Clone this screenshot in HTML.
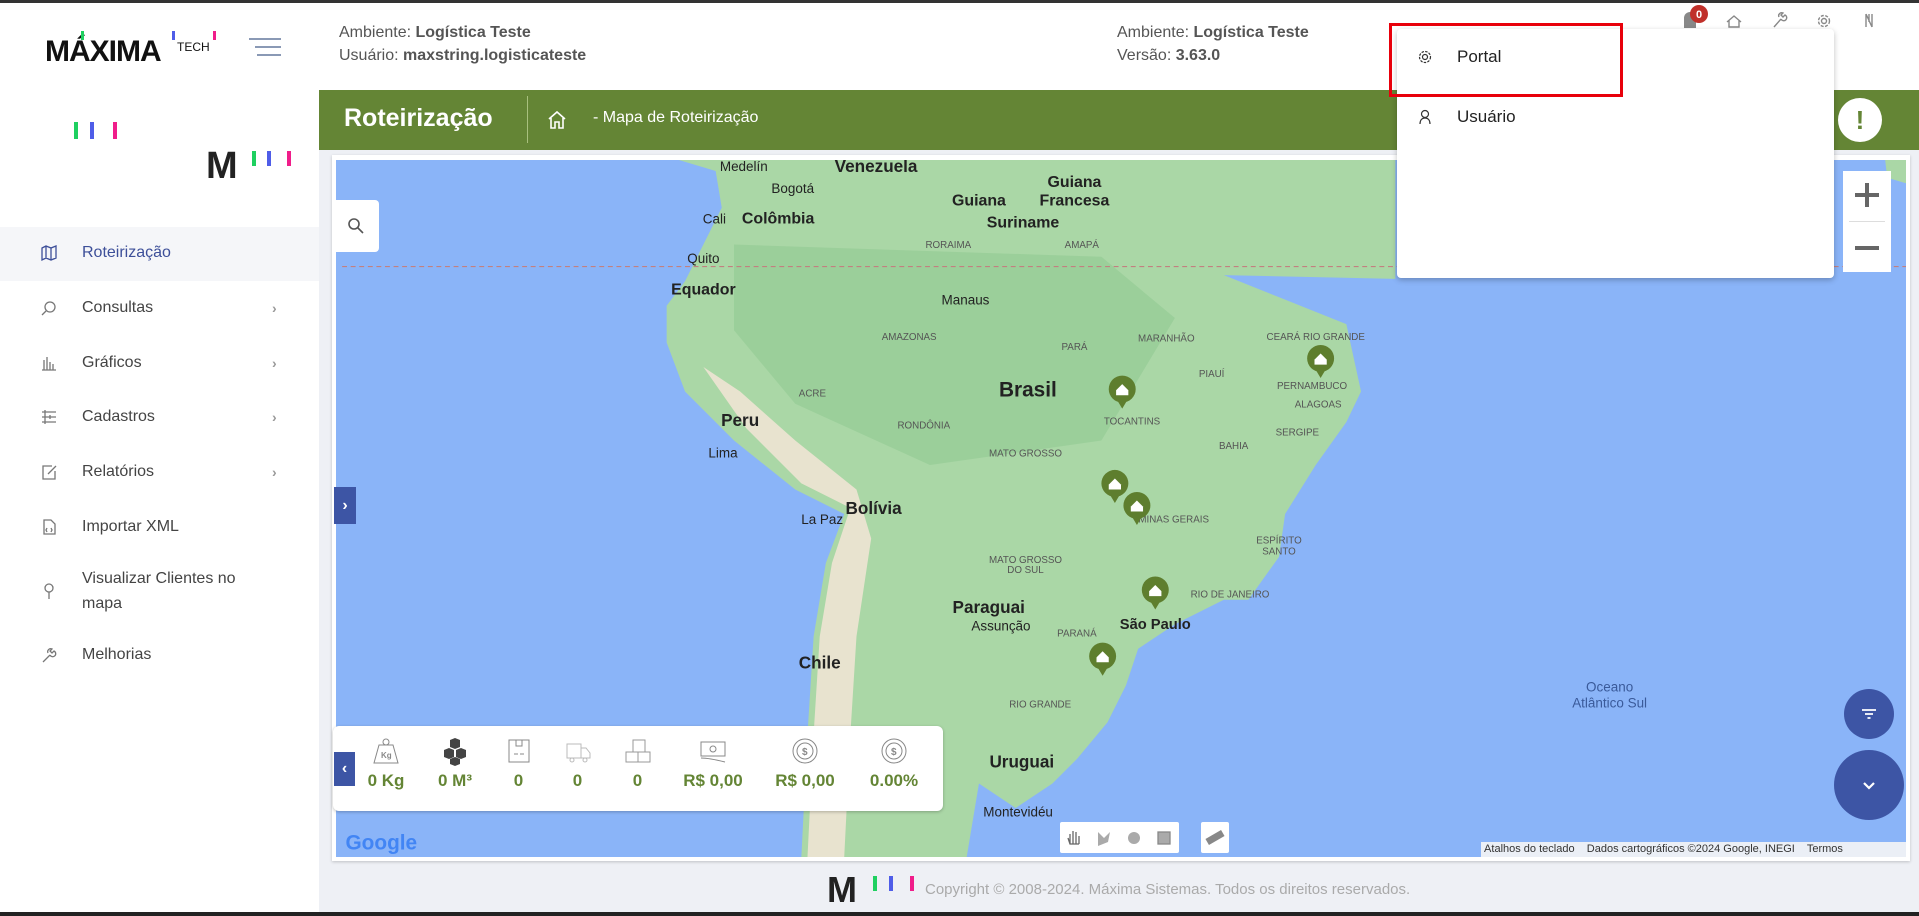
<!DOCTYPE html>
<html><head><meta charset="utf-8">
<style>
*{box-sizing:border-box;margin:0;padding:0}
body{width:1919px;height:916px;overflow:hidden;background:#eef0f5;font-family:"Liberation Sans",sans-serif;position:relative;color:#333}
.a{position:absolute}
.hdr{left:0;top:0;width:1919px;height:90px;background:#fff;border-top:3px solid #333}
.htxt{font-size:16px;color:#555;line-height:23px}
.htxt b{color:#555}
.side{left:0;top:90px;width:319px;height:826px;background:#fff}
.mi{position:absolute;left:0;width:319px;height:40px;font-size:16px;color:#444;display:flex;align-items:center}
.mi .ic{position:absolute;left:40px;width:18px;height:18px}
.mi span{position:absolute;left:82px}
.mi .ch{position:absolute;left:272px;color:#999;font-size:14px}
.green{left:319px;top:90px;width:1600px;height:60px;background:#648535}
.stat{position:absolute;top:0;text-align:center;color:#648535;font-weight:bold;font-size:17px}
</style></head><body>
<div class="a hdr"></div>
<div class="a" style="left:45px;top:35px;font-size:30px;font-weight:bold;color:#111;letter-spacing:-1px">MÁXIMA</div>
<div class="a" style="left:177px;top:40px;font-size:12px;color:#111">TECH</div>
<div class="a" style="left:81px;top:31px;width:3px;height:9px;background:#1fd060"></div>
<div class="a" style="left:172px;top:31px;width:3px;height:9px;background:#4f5de8"></div>
<div class="a" style="left:213px;top:31px;width:3px;height:9px;background:#f01d8a"></div>
<div class="a" style="left:249px;top:38px;width:32px;height:2px;background:#8a99b5"></div>
<div class="a" style="left:255px;top:46px;width:26px;height:2px;background:#8a99b5"></div>
<div class="a" style="left:257px;top:54px;width:24px;height:2px;background:#8a99b5"></div>
<div class="a htxt" style="left:339px;top:21px">Ambiente: <b>Logística Teste</b><br>Usuário: <b>maxstring.logisticateste</b></div>
<div class="a htxt" style="left:1117px;top:21px">Ambiente: <b>Logística Teste</b><br>Versão: <b>3.63.0</b></div>
<svg class="a" style="left:1672px;top:0" width="240" height="36" viewBox="0 0 240 36" fill="none" stroke="#888" stroke-width="1.4">
<path d="M12 28v-10a6 6 0 0 1 12 0v10z" fill="#888" stroke="none"/>
<circle cx="27" cy="14" r="9" fill="#c0302a" stroke="none"/>
<text x="27" y="18" font-size="11" fill="#fff" stroke="none" text-anchor="middle" font-weight="bold" font-family="Liberation Sans">0</text>
<path d="M55 22l7-6 7 6M57 20v7h10v-7"/>
<path d="M102 27l7-8m0 0a3 3 0 1 0 4-4l-2 2-2-2 2-2a3 3 0 0 0-4 4"/>
<circle cx="152" cy="21" r="2.5"/><circle cx="152" cy="21" r="5.5" stroke-dasharray="3 1.5"/>
<path d="M194 14v13M194 14l6 13M200 14v13M197 14v8"/>
</svg>
<div class="a side"></div>
<div class="a" style="left:74px;top:122px;width:4px;height:17px;background:#1fd060"></div>
<div class="a" style="left:90px;top:122px;width:4px;height:17px;background:#4f5de8"></div>
<div class="a" style="left:113px;top:122px;width:4px;height:17px;background:#f01d8a"></div>
<div class="a" style="left:206px;top:145px;font-size:38px;font-weight:bold;color:#222">M</div>
<div class="a" style="left:252px;top:151px;width:4px;height:15px;background:#1fd060"></div>
<div class="a" style="left:267px;top:151px;width:4px;height:15px;background:#4f5de8"></div>
<div class="a" style="left:287px;top:151px;width:4px;height:15px;background:#f01d8a"></div>
<div class="a" style="left:0;top:227px;width:319px;height:54px;background:#f5f6f9"></div>
<div class="mi" style="top:233px;color:#3d4f99"><svg class="ic" style="top:11px" viewBox="0 0 18 18" fill="none" stroke="#3d4f99" stroke-width="1.3"><path d="M2 4l4-2 5 2 5-2v12l-5 2-5-2-4 2zM6 2v12M11 4v12"/></svg><span>Roteirização</span></div>
<div class="mi" style="top:288px"><svg class="ic" style="top:11px" viewBox="0 0 18 18" fill="none" stroke="#777" stroke-width="1.3"><circle cx="10" cy="8" r="5"/><path d="M6 12l-4 4"/></svg><span>Consultas</span><b class="ch">›</b></div>
<div class="mi" style="top:343px"><svg class="ic" style="top:11px" viewBox="0 0 18 18" fill="none" stroke="#777" stroke-width="1.3"><path d="M2 16h14M4 16V6M7 16V3M10 16V8M13 16V10"/></svg><span>Gráficos</span><b class="ch">›</b></div>
<div class="mi" style="top:397px"><svg class="ic" style="top:11px" viewBox="0 0 18 18" fill="none" stroke="#777" stroke-width="1.3"><path d="M2 4h14M2 9h14M2 14h14M5 2v14M10 7v4"/></svg><span>Cadastros</span><b class="ch">›</b></div>
<div class="mi" style="top:452px"><svg class="ic" style="top:11px" viewBox="0 0 18 18" fill="none" stroke="#777" stroke-width="1.3"><path d="M12 3H3v13h12V8M8 11l8-8"/></svg><span>Relatórios</span><b class="ch">›</b></div>
<div class="mi" style="top:507px"><svg class="ic" style="top:11px" viewBox="0 0 18 18" fill="none" stroke="#777" stroke-width="1.3"><path d="M4 2h7l4 4v10H4zM7 10l-1 2 1 2M11 10l1 2-1 2"/></svg><span>Importar XML</span></div>
<div class="mi" style="top:566px;height:50px"><svg class="ic" style="top:16px" viewBox="0 0 18 18" fill="none" stroke="#777" stroke-width="1.3"><circle cx="9" cy="6" r="4"/><path d="M9 10v7"/></svg><span style="line-height:25px">Visualizar Clientes no<br>mapa</span></div>
<div class="mi" style="top:635px"><svg class="ic" style="top:11px" viewBox="0 0 18 18" fill="none" stroke="#777" stroke-width="1.3"><path d="M3 16l7-7m0 0a3 3 0 1 0 4-4l-2 2-2-2 2-2a3 3 0 0 0-4 4"/></svg><span>Melhorias</span></div>
<div class="a green"></div>
<div class="a" style="left:344px;top:104px;font-size:25px;font-weight:bold;color:#fff">Roteirização</div>
<div class="a" style="left:527px;top:96px;width:1px;height:47px;background:#a8c07e"></div>
<svg class="a" style="left:548px;top:110px" width="18" height="20" viewBox="0 0 18 20" fill="none" stroke="#fff" stroke-width="1.6"><path d="M1 9l8-7 8 7M3 8v10h4v-6h4v6h4V8"/></svg>
<div class="a" style="left:593px;top:109px;font-size:16px;color:#fff">- Mapa de Roteirização</div>
<div class="a" style="left:1838px;top:98px;width:44px;height:44px;border-radius:50%;background:#fff;color:#648535;font-weight:bold;font-size:26px;text-align:center;line-height:44px">!</div>
<div class="a" style="left:332px;top:155px;width:1578px;height:706px;background:#fff;box-shadow:0 1px 3px rgba(0,0,0,.2)"></div>
<svg class="a" style="left:336px;top:160px" width="1570" height="697" viewBox="275 131 1282 569" preserveAspectRatio="none">
<rect x="275" y="131" width="1282" height="569" fill="#8ab4f8"/>
<path d="M555 131 L1140 131 L1140 228 L1000 225 L960 215 L935 205 L900 200 L930 190 L935 205 L1000 225 L1050 245 L1100 265 L1112 320 L1100 345 L1075 380 L1050 420 L1045 455 L1020 490 L1000 490 L960 510 L930 530 L920 560 L905 590 L880 620 L860 640 L830 660 L800 640 L790 700 L655 700 L660 600 L665 520 L675 460 L690 420 L650 400 L600 360 L560 320 L545 280 L545 250 L560 230 L575 200 L590 170 L585 140 Z" fill="#aad7a6"/>
<path d="M600 200 L900 210 L960 260 L900 360 L760 380 L650 330 L600 270Z" fill="#94cc96" opacity=".7"/>
<path d="M575 300 L610 350 L655 395 L695 415 L680 460 L670 520 L665 600 L660 700 L690 700 L695 600 L700 520 L712 440 L700 400 L650 360 L605 320Z" fill="#e8e3cf"/>
<path d="M1140 131 L1557 131 L1557 150 L1540 145 L1535 170 L1545 175 L1540 131Z" fill="#aad7a6"/>
<path d="M280 218 H1557" stroke="#c28080" stroke-width="1" stroke-dasharray="4 3"/>
<g font-family="Liberation Sans" text-anchor="middle" fill="#222">
<text x="840" y="324" font-size="17" font-weight="bold">Brasil</text>
<text x="716" y="141" font-size="14" font-weight="bold">Venezuela</text>
<text x="636" y="183" font-size="13" font-weight="bold">Colômbia</text>
<text x="575" y="241" font-size="13" font-weight="bold">Equador</text>
<text x="605" y="348" font-size="14" font-weight="bold">Peru</text>
<text x="714" y="420" font-size="14" font-weight="bold">Bolívia</text>
<text x="808" y="501" font-size="14" font-weight="bold">Paraguai</text>
<text x="670" y="546" font-size="14" font-weight="bold">Chile</text>
<text x="835" y="627" font-size="14" font-weight="bold">Uruguai</text>
<text x="878" y="153" font-size="13" font-weight="bold">Guiana</text>
<text x="878" y="168" font-size="13" font-weight="bold">Francesa</text>
<text x="800" y="168" font-size="13" font-weight="bold">Guiana</text>
<text x="836" y="186" font-size="13" font-weight="bold">Suriname</text>
<text x="608" y="140" font-size="11">Medelín</text>
<text x="648" y="158" font-size="11">Bogotá</text>
<text x="584" y="183" font-size="11">Cali</text>
<text x="575" y="215" font-size="11">Quito</text>
<text x="789" y="249" font-size="11">Manaus</text>
<text x="591" y="374" font-size="11">Lima</text>
<text x="672" y="428" font-size="11">La Paz</text>
<text x="818" y="515" font-size="11">Assunção</text>
<text x="944" y="514" font-size="12" font-weight="bold">São Paulo</text>
<text x="832" y="667" font-size="11">Montevidéu</text>
<text x="1315" y="565" font-size="11" fill="#3a5a9a">Oceano</text>
<text x="1315" y="578" font-size="11" fill="#3a5a9a">Atlântico Sul</text>
<g font-size="8" fill="#555"><text x="743" y="278">AMAZONAS</text><text x="664" y="324">ACRE</text><text x="755" y="350">RONDÔNIA</text><text x="838" y="373">MATO GROSSO</text><text x="925" y="347">TOCANTINS</text><text x="1008" y="367">BAHIA</text><text x="959" y="427">MINAS GERAIS</text><text x="838" y="460">MATO GROSSO</text><text x="838" y="468">DO SUL</text><text x="880" y="520">PARANÁ</text><text x="850" y="578">RIO GRANDE</text><text x="1077" y="333">ALAGOAS</text><text x="1060" y="356">SERGIPE</text><text x="1045" y="444">ESPÍRITO</text><text x="1045" y="453">SANTO</text><text x="1005" y="488">RIO DE JANEIRO</text><text x="1072" y="318">PERNAMBUCO</text><text x="990" y="308">PIAUÍ</text><text x="953" y="279">MARANHÃO</text><text x="1075" y="278">CEARÁ RIO GRANDE</text><text x="878" y="286">PARÁ</text><text x="775" y="203">RORAIMA</text><text x="884" y="203">AMAPÁ</text></g>
</g>
<g fill="#5e7e2e">
<g transform="translate(917,318)"><circle r="11"/><path d="M-6 6 L0 16 L6 6Z"/><path d="M-5 1 L0 -4 L5 1 V5 H-5Z" fill="#fff"/></g>
<g transform="translate(1079,293)"><circle r="11"/><path d="M-6 6 L0 16 L6 6Z"/><path d="M-5 1 L0 -4 L5 1 V5 H-5Z" fill="#fff"/></g>
<g transform="translate(911,395)"><circle r="11"/><path d="M-6 6 L0 16 L6 6Z"/><path d="M-5 1 L0 -4 L5 1 V5 H-5Z" fill="#fff"/></g>
<g transform="translate(929,413)"><circle r="11"/><path d="M-6 6 L0 16 L6 6Z"/><path d="M-5 1 L0 -4 L5 1 V5 H-5Z" fill="#fff"/></g>
<g transform="translate(944,482)"><circle r="11"/><path d="M-6 6 L0 16 L6 6Z"/><path d="M-5 1 L0 -4 L5 1 V5 H-5Z" fill="#fff"/></g>
<g transform="translate(901,536)"><circle r="11"/><path d="M-6 6 L0 16 L6 6Z"/><path d="M-5 1 L0 -4 L5 1 V5 H-5Z" fill="#fff"/></g>
</g>
<text x="312" y="694" font-family="Liberation Sans" font-size="17" font-weight="bold" fill="#4285f4" text-anchor="middle">Google</text>
</svg>
<div class="a" style="left:333px;top:200px;width:46px;height:52px;background:#fff;border-radius:0 4px 4px 0"></div>
<svg class="a" style="left:347px;top:217px" width="18" height="18" viewBox="0 0 18 18" fill="none" stroke="#555" stroke-width="1.6"><circle cx="7" cy="7" r="5"/><path d="M11 11l5 5"/></svg>
<div class="a" style="left:334px;top:487px;width:22px;height:37px;background:#3d55a5;color:#fff;font-weight:bold;text-align:center;line-height:37px">›</div>
<div class="a" style="left:1843px;top:171px;width:48px;height:101px;background:#fff"></div>
<div class="a" style="left:1849px;top:221px;width:36px;height:1px;background:#ddd"></div>
<div class="a" style="left:1855px;top:193px;width:24px;height:4px;background:#666"></div><div class="a" style="left:1865px;top:183px;width:4px;height:24px;background:#666"></div>
<div class="a" style="left:1855px;top:246px;width:24px;height:4px;background:#666"></div>
<div class="a" style="left:1844px;top:689px;width:50px;height:50px;border-radius:50%;background:#3d55a5"></div>
<svg class="a" style="left:1859px;top:704px" width="20" height="20" viewBox="0 0 20 20" stroke="#fff" stroke-width="1.8"><path d="M3 6h14M6 10h8M8.5 14h3"/></svg>
<div class="a" style="left:1834px;top:750px;width:70px;height:70px;border-radius:50%;background:#3d55a5"></div>
<svg class="a" style="left:1860px;top:776px" width="18" height="18" viewBox="0 0 18 18" fill="none" stroke="#fff" stroke-width="2.2"><path d="M4 7l5 5 5-5"/></svg>
<div class="a" style="left:333px;top:726px;width:610px;height:85px;background:#fff;border-radius:6px;box-shadow:0 1px 3px rgba(0,0,0,.25)"></div>
<div class="a" style="left:334px;top:752px;width:21px;height:34px;background:#3d55a5;color:#fff;font-weight:bold;text-align:center;line-height:34px">‹</div>
<div class="a" style="left:333px;top:726px;width:610px;height:85px">
<div class="stat" style="left:30px;width:46px"><svg width="28" height="30" viewBox="0 0 28 30" fill="none" stroke="#888" style="margin-top:10px"><circle cx="14" cy="6" r="3"/><path d="M7 9h14l5 18H2z"/><text x="9" y="22" font-size="8" fill="#888" stroke="none">Kg</text></svg><div>0 Kg</div></div>
<div class="stat" style="left:99px;width:46px"><svg width="30" height="30" viewBox="0 0 30 30" fill="#444" style="margin-top:10px"><path d="M10 4l5-2 5 2v7l-5 2-5-2zM4 14l5-2 5 2v7l-5 2-5-2zM16 14l5-2 5 2v7l-5 2-5-2zM10 23l5-2 5 2v5l-5 2-5-2z"/></svg><div>0 M³</div></div>
<div class="stat" style="left:168px;width:35px"><svg width="26" height="30" viewBox="0 0 26 30" fill="none" stroke="#888" style="margin-top:10px"><rect x="3" y="4" width="20" height="22"/><path d="M10 4v6h6V4M8 18h4M14 18h4"/></svg><div>0</div></div>
<div class="stat" style="left:227px;width:35px"><svg width="28" height="30" viewBox="0 0 28 30" fill="none" stroke="#bbb" style="margin-top:10px"><path d="M3 8h14v14H3zM17 12h5l4 5v5h-9"/><circle cx="8" cy="24" r="2"/><circle cx="21" cy="24" r="2"/></svg><div>0</div></div>
<div class="stat" style="left:287px;width:35px"><svg width="28" height="30" viewBox="0 0 28 30" fill="none" stroke="#999" style="margin-top:10px"><path d="M2 16h24v10H2zM14 16v10M9 4h12v12H9z"/></svg><div>0</div></div>
<div class="stat" style="left:346px;width:68px"><svg width="30" height="30" viewBox="0 0 30 30" fill="none" stroke="#888" style="margin-top:10px"><rect x="3" y="6" width="24" height="14"/><circle cx="15" cy="13" r="3"/><path d="M3 22c8 0 16 2 24 4"/></svg><div>R$ 0,00</div></div>
<div class="stat" style="left:438px;width:68px"><svg width="30" height="30" viewBox="0 0 30 30" fill="none" stroke="#888" style="margin-top:10px"><circle cx="15" cy="15" r="12"/><circle cx="15" cy="15" r="8"/><text x="12" y="19" font-size="10" fill="#888" stroke="none">$</text></svg><div>R$ 0,00</div></div>
<div class="stat" style="left:531px;width:60px"><svg width="30" height="30" viewBox="0 0 30 30" fill="none" stroke="#888" style="margin-top:10px"><circle cx="15" cy="15" r="12"/><circle cx="15" cy="15" r="8"/><text x="12" y="19" font-size="10" fill="#888" stroke="none">$</text></svg><div>0.00%</div></div>
</div>
<div class="a" style="left:1060px;top:822px;width:119px;height:31px;background:#fff;border-radius:2px"></div>
<svg class="a" style="left:1060px;top:822px" width="119" height="31" viewBox="0 0 119 31" fill="none" stroke="#666" stroke-width="1.3"><path d="M10 22v-10M13 22V9M16 22V10M19 22v-8M8 16l2 6h9"/><path d="M38 10v14l10-4 2-10-6 6z" fill="#aaa" stroke="none"/><circle cx="74" cy="16" r="6" fill="#aaa" stroke="none"/><rect x="98" y="10" width="12" height="12" fill="#aaa" stroke="#888"/></svg>
<div class="a" style="left:1201px;top:822px;width:28px;height:31px;background:#fff;border-radius:2px"></div>
<div class="a" style="left:1206px;top:834px;width:18px;height:7px;background:#888;transform:rotate(-30deg)"></div>
<div class="a" style="left:1481px;top:842px;width:425px;height:15px;background:rgba(245,245,245,.9);font-size:11px;color:#333;line-height:15px;white-space:nowrap">&nbsp;Atalhos do teclado &nbsp;&nbsp; Dados cartográficos ©2024 Google, INEGI &nbsp;&nbsp; Termos</div>
<div class="a" style="left:827px;top:872px;font-size:36px;font-weight:bold;color:#222;line-height:36px">M</div>
<div class="a" style="left:873px;top:876px;width:4px;height:15px;background:#1fd060"></div>
<div class="a" style="left:889px;top:876px;width:4px;height:15px;background:#4f5de8"></div>
<div class="a" style="left:910px;top:876px;width:4px;height:15px;background:#f01d8a"></div>
<div class="a" style="left:925px;top:881px;font-size:15px;color:#aaa">Copyright © 2008-2024. Máxima Sistemas. Todos os direitos reservados.</div>
<div class="a" style="left:0;top:912px;width:1919px;height:4px;background:#222"></div>
<div class="a" style="left:1397px;top:29px;width:437px;height:249px;background:#fff;border-radius:4px;box-shadow:0 2px 6px rgba(0,0,0,.25)"></div>
<div class="a" style="left:1389px;top:23px;width:234px;height:74px;border:3px solid #e8000b"></div>
<svg class="a" style="left:1417px;top:49px" width="16" height="16" viewBox="0 0 16 16" fill="none" stroke="#333" stroke-width="1.2"><circle cx="8" cy="8" r="2.5"/><circle cx="8" cy="8" r="5.5" stroke-dasharray="2.5 1.2"/></svg>
<div class="a" style="left:1457px;top:47px;font-size:17px;color:#222">Portal</div>
<svg class="a" style="left:1417px;top:109px" width="16" height="16" viewBox="0 0 16 16" fill="none" stroke="#333" stroke-width="1.2"><circle cx="8" cy="5" r="3.5"/><path d="M3 15c0-4 2-6 5-6s5 2 5 6"/></svg>
<div class="a" style="left:1457px;top:107px;font-size:17px;color:#222">Usuário</div>
</body></html>
